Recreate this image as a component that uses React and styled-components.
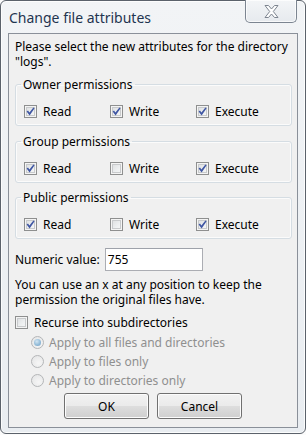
import React from 'react';
import styled, { createGlobalStyle } from 'styled-components';

const GlobalStyle = createGlobalStyle`
  html, body {
    margin: 0;
    padding: 0;
    background: #fbfbfb;
  }
  body {
    font-family: "Segoe UI", "Noto Sans", "Open Sans", sans-serif;
  }
`;

const Window = styled.div`
  box-sizing: border-box;
  width: 306px;
  height: 434px;
  display: flex;
  flex-direction: column;
  border: 1px solid #5b626b;
  border-radius: 6px;
  background: linear-gradient(180deg, #f2f4f6 0%, #eef1f4 40%, #e9edf1 100%);
  box-shadow: inset 0 0 0 1px rgba(255, 255, 255, 0.8);
  padding: 0 7px 5px 7px;
`;

const TitleBar = styled.div`
  height: 32px;
  display: flex;
  align-items: flex-start;
  justify-content: space-between;
`;

const Title = styled.div`
  font-size: 14px;
  color: #1f3550;
  padding: 8px 0 0 1px;
  line-height: 18px;
`;

const CloseButton = styled.div`
  box-sizing: border-box;
  width: 52px;
  height: 23px;
  margin-top: -1px;
  margin-right: 1px;
  border: 1px solid #7c8591;
  border-top: none;
  border-radius: 0 0 5px 5px;
  background: linear-gradient(180deg, #f3f5f7 0%, #e6eaee 100%);
  box-shadow: inset 0 0 0 1px rgba(255, 255, 255, 0.7);
  display: flex;
  align-items: center;
  justify-content: center;
`;

const Client = styled.div`
  flex: 1;
  box-sizing: border-box;
  border: 1px solid #8a9099;
  background: #f0f0f0;
  padding: 5px 5px 6px 6px;
  display: flex;
  flex-direction: column;
  font-size: 12px;
  line-height: 15px;
  color: #000;
`;

const Text = styled.p`
  margin: ${p => p.$mt || 0}px 0 0 0;
`;

const Group = styled.fieldset`
  margin: ${p => p.$mt}px 0 0 0;
  padding: 12px 8px 6px 8px;
  border: 1px solid #d5dde3;
  border-radius: 3px;
  box-shadow: inset 0 0 0 1px #fbfbfb;
  display: grid;
  grid-template-columns: 86px 86px 86px;
`;

const Legend = styled.legend`
  padding: 0 2px;
  margin-left: -3px;
  line-height: 15px;
`;

const CheckRow = styled.label`
  display: flex;
  align-items: center;
  gap: 6px;
  height: 15px;
  margin: ${p => p.$mt || 0}px 0 0 0;
`;

const Box = styled.span`
  box-sizing: border-box;
  width: 13px;
  height: 13px;
  border: 1px solid #8e8f8f;
  background: linear-gradient(135deg, #d9dbdd 0%, #eef0f1 60%, #f8f8f8 100%);
  box-shadow: inset 0 0 0 1px #f4f4f4, inset 0 0 0 2px #c8cacc;
  display: flex;
  align-items: center;
  justify-content: center;
  flex: none;
`;

const NumericRow = styled.div`
  display: flex;
  align-items: center;
  gap: 5px;
  margin-top: 9px;
`;

const Input = styled.div`
  box-sizing: border-box;
  width: 98px;
  height: 23px;
  border: 1px solid #abadb3;
  border-top-color: #9ea2aa;
  background: #fff;
  padding: 3px 0 0 2px;
  font-size: 12px;
  line-height: 15px;
`;

const RadioList = styled.div`
  display: flex;
  flex-direction: column;
  margin: 3px 0 0 16px;
`;

const RadioRow = styled.div`
  display: flex;
  align-items: center;
  gap: 5px;
  height: 19px;
  color: #8f8f8f;
`;

const Radio = styled.span`
  box-sizing: border-box;
  width: 13px;
  height: 13px;
  border-radius: 50%;
  border: 1px solid #b4b6b8;
  background: radial-gradient(circle at 60% 65%, #f6f6f6 0%, #e2e3e4 100%);
  display: flex;
  align-items: center;
  justify-content: center;
  flex: none;
`;

const Dot = styled.span`
  width: 7px;
  height: 7px;
  border-radius: 50%;
  background: radial-gradient(circle at 40% 35%, #d3e6f3 0%, #93bcd9 55%, #6f9cc3 100%);
`;

const Buttons = styled.div`
  display: flex;
  justify-content: center;
  gap: 8px;
  margin-top: 3px;
  padding-right: 1px;
`;

const Button = styled.div`
  box-sizing: border-box;
  width: 85px;
  height: 26px;
  border: 1px solid #707070;
  border-radius: 3px;
  background: linear-gradient(180deg, #f2f2f2 0%, #ebebeb 48%, #dddddd 52%, #cfcfcf 100%);
  box-shadow: inset 0 0 0 1px #fcfcfc;
  display: flex;
  align-items: center;
  justify-content: center;
  font-size: 12px;
`;

function Check({ checked }) {
  return (
    <Box>
      {checked && (
        <svg width="9" height="9" viewBox="0 0 9 9">
          <path d="M0.6 4.6 L2.0 3.6 L3.4 5.6 L7.4 0.4 L8.6 1.3 L3.6 8.4 Z" fill="#3f56a3" />
        </svg>
      )}
    </Box>
  );
}

function PermGroup({ title, perms, mt }) {
  const names = ['Read', 'Write', 'Execute'];
  return (
    <Group $mt={mt}>
      <Legend>{title}</Legend>
      {names.map((n, i) => (
        <CheckRow key={n}>
          <Check checked={perms[i]} />
          {n}
        </CheckRow>
      ))}
    </Group>
  );
}

export default function App() {
  return (
    <>
      <GlobalStyle />
      <Window>
        <TitleBar>
          <Title>Change file attributes</Title>
          <CloseButton>
            <svg width="17" height="15" viewBox="0 0 17 15">
              <path
                d="M2 1.5 H5.5 L8.5 5 L11.5 1.5 H15 L10.3 7.5 L15 13.5 H11.5 L8.5 10 L5.5 13.5 H2 L6.7 7.5 Z"
                fill="#ffffff"
                stroke="#7d8590"
                strokeWidth="1"
                strokeLinejoin="round"
              />
            </svg>
          </CloseButton>
        </TitleBar>
        <Client>
          <Text>Please select the new attributes for the directory "logs".</Text>
          <PermGroup mt={8} title="Owner permissions" perms={[true, true, true]} />
          <PermGroup mt={8} title="Group permissions" perms={[true, false, true]} />
          <PermGroup mt={7} title="Public permissions" perms={[true, false, true]} />
          <NumericRow>
            Numeric value:
            <Input>755</Input>
          </NumericRow>
          <Text $mt={6}>You can use an x at any position to keep the permission the original files have.</Text>
          <CheckRow $mt={8}>
            <Check checked={false} />
            Recurse into subdirectories
          </CheckRow>
          <RadioList>
            <RadioRow>
              <Radio><Dot /></Radio>
              Apply to all files and directories
            </RadioRow>
            <RadioRow>
              <Radio />
              Apply to files only
            </RadioRow>
            <RadioRow>
              <Radio />
              Apply to directories only
            </RadioRow>
          </RadioList>
          <Buttons>
            <Button>OK</Button>
            <Button>Cancel</Button>
          </Buttons>
        </Client>
      </Window>
    </>
  );
}
